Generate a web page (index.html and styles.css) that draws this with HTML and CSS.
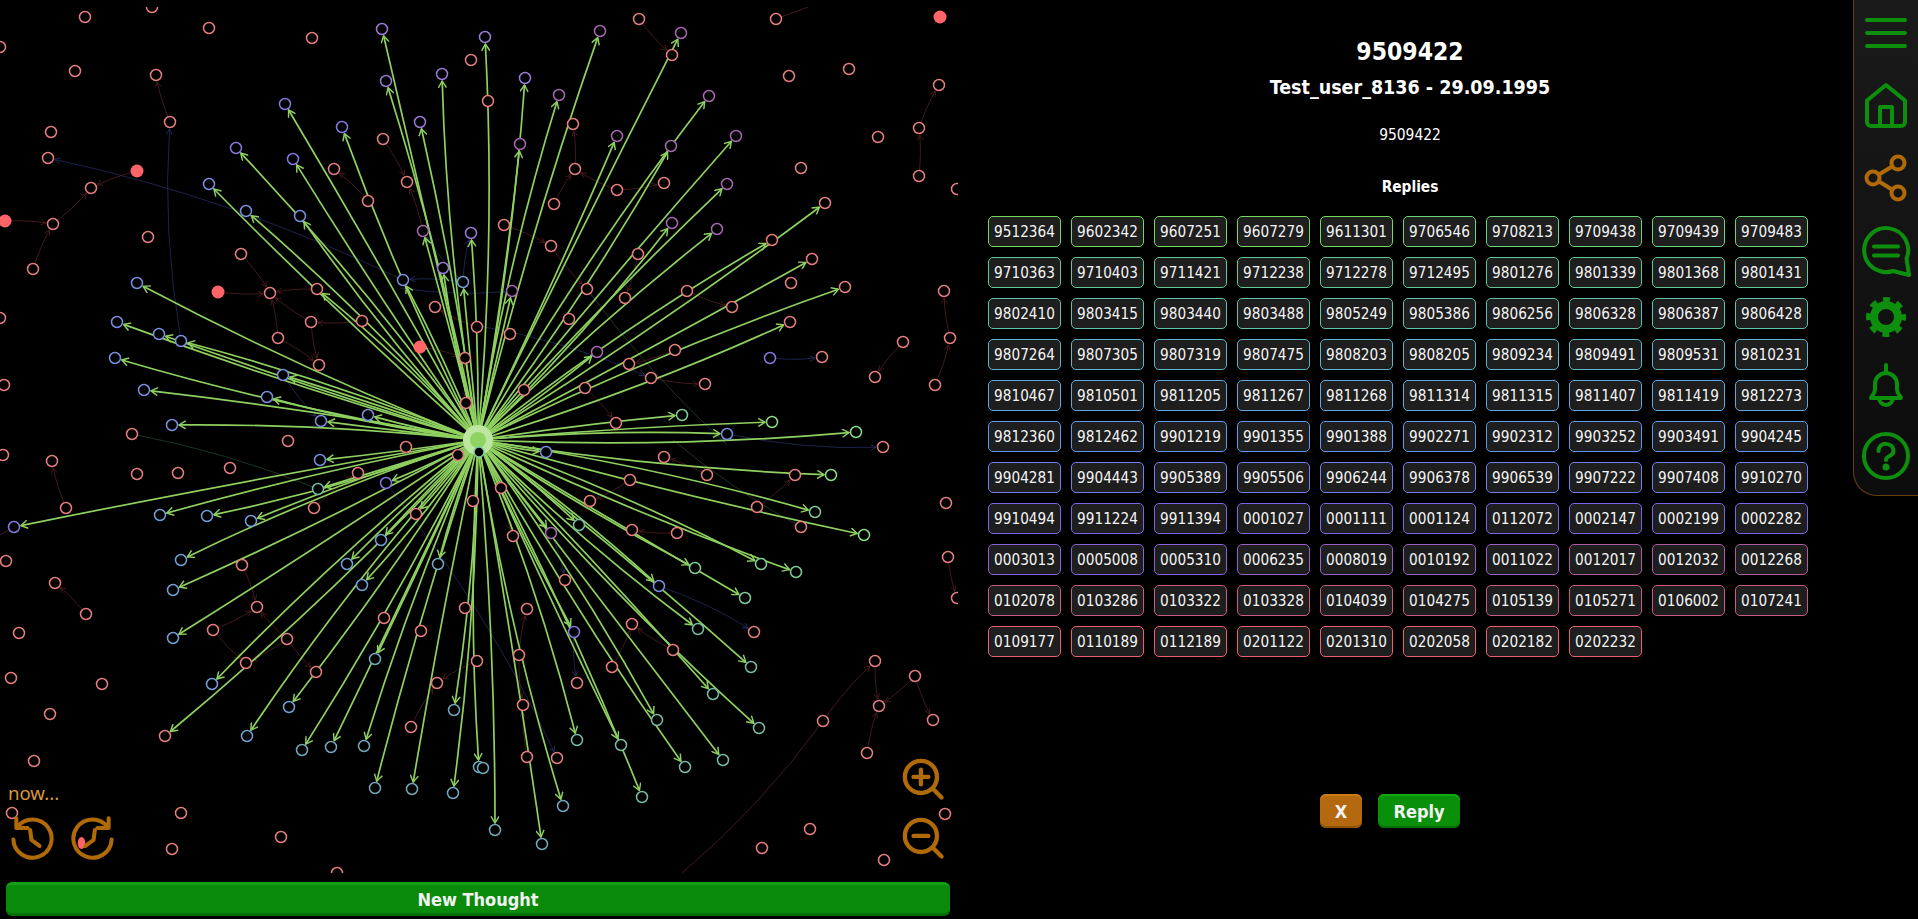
FILE: index.html
```html
<!DOCTYPE html>
<html lang="en">
<head>
  <meta charset="UTF-8">
  <title>Thought graph</title>
  <link rel="stylesheet" href="styles.css">
</head>
<body>
  <div class="app">
    <section class="graph-pane">
      <svg id="graph" class="graph" width="958" height="866" viewBox="0 7 958 866">
        <defs>
          <marker id="arrow-green" markerUnits="userSpaceOnUse" viewBox="0 0 10 10" refX="9" refY="5" markerWidth="9" markerHeight="9" orient="auto">
            <path d="M1.5 .5L9 5L1.5 9.5" fill="none" stroke="#8fd160" stroke-width="1.6"/>
          </marker>
          <marker id="arrow-pink" markerUnits="userSpaceOnUse" viewBox="0 0 10 10" refX="9" refY="5" markerWidth="7" markerHeight="7" orient="auto">
            <path d="M1.5 1L9 5L1.5 9" fill="none" stroke="#4a1d1f" stroke-width="1.2"/>
          </marker>
          <marker id="arrow-blue" markerUnits="userSpaceOnUse" viewBox="0 0 10 10" refX="9" refY="5" markerWidth="7" markerHeight="7" orient="auto">
            <path d="M1.5 1L9 5L1.5 9" fill="none" stroke="#2a3266" stroke-width="1.2"/>
          </marker>
        </defs>
      </svg>

      <div class="now-label">now...</div>
      <button class="tool tool-back" aria-label="Back in time">
        <svg viewBox="0 0 24 24"><path d="M3 12.500A9 9 0 1 0 4.900 6.500"/><path d="M4.400 2.500V7.100H9.700"/><path d="M10.900 8l.6 4.700l3.800 2.800"/></svg>
      </button>
      <button class="tool tool-forward" aria-label="Forward in time">
        <svg viewBox="0 0 24 24"><path d="M3 12.500A9 9 0 1 0 4.900 6.500"/><path d="M4.400 2.500V7.100H9.700"/><path d="M10.900 8l.6 4.700l3.800 2.800"/></svg>
      </button>
      <button class="tool tool-zoomin" aria-label="Zoom in">
        <svg viewBox="0 0 24 24"><circle cx="10" cy="10" r="7"/><path d="M15.200 15.200l3.800 3.800"/><path d="M6.800 10h6.400"/><path d="M10 6.800v6.400"/></svg>
      </button>
      <button class="tool tool-zoomout" aria-label="Zoom out">
        <svg viewBox="0 0 24 24"><circle cx="10" cy="10" r="7"/><path d="M15.200 15.200l3.800 3.800"/><path d="M6.800 10h6.400"/></svg>
      </button>

      <button class="new-thought">New Thought</button>
    </section>

    <section class="detail">
      <h1 class="detail-id">9509422</h1>
      <h2 class="detail-author">Test_user_8136 - 29.09.1995</h2>
      <p class="detail-body">9509422</p>
      <h3 class="detail-replies">Replies</h3>
      <div class="reply-grid">
        <a class="reply r1">9512364</a><a class="reply r1">9602342</a><a class="reply r1">9607251</a><a class="reply r1">9607279</a><a class="reply r1">9611301</a><a class="reply r1b">9706546</a><a class="reply r1b">9708213</a><a class="reply r1b">9709438</a><a class="reply r1b">9709439</a><a class="reply r1b">9709483</a>
        <a class="reply r2">9710363</a><a class="reply r2">9710403</a><a class="reply r2">9711421</a><a class="reply r2">9712238</a><a class="reply r2">9712278</a><a class="reply r2">9712495</a><a class="reply r2">9801276</a><a class="reply r2">9801339</a><a class="reply r2">9801368</a><a class="reply r2">9801431</a>
        <a class="reply r3">9802410</a><a class="reply r3">9803415</a><a class="reply r3">9803440</a><a class="reply r3">9803488</a><a class="reply r3">9805249</a><a class="reply r3">9805386</a><a class="reply r3">9806256</a><a class="reply r3">9806328</a><a class="reply r3">9806387</a><a class="reply r3">9806428</a>
        <a class="reply r4">9807264</a><a class="reply r4">9807305</a><a class="reply r4">9807319</a><a class="reply r4">9807475</a><a class="reply r4">9808203</a><a class="reply r4">9808205</a><a class="reply r4">9809234</a><a class="reply r4">9809491</a><a class="reply r4">9809531</a><a class="reply r4">9810231</a>
        <a class="reply r5">9810467</a><a class="reply r5">9810501</a><a class="reply r5">9811205</a><a class="reply r5">9811267</a><a class="reply r5">9811268</a><a class="reply r5">9811314</a><a class="reply r5">9811315</a><a class="reply r5">9811407</a><a class="reply r5">9811419</a><a class="reply r5">9812273</a>
        <a class="reply r6">9812360</a><a class="reply r6">9812462</a><a class="reply r6">9901219</a><a class="reply r6">9901355</a><a class="reply r6">9901388</a><a class="reply r6">9902271</a><a class="reply r6">9902312</a><a class="reply r6">9903252</a><a class="reply r6">9903491</a><a class="reply r6">9904245</a>
        <a class="reply r7">9904281</a><a class="reply r7">9904443</a><a class="reply r7">9905389</a><a class="reply r7">9905506</a><a class="reply r7">9906244</a><a class="reply r7">9906378</a><a class="reply r7">9906539</a><a class="reply r7">9907222</a><a class="reply r7">9907408</a><a class="reply r7">9910270</a>
        <a class="reply r8">9910494</a><a class="reply r8">9911224</a><a class="reply r8">9911394</a><a class="reply r8">0001027</a><a class="reply r8">0001111</a><a class="reply r8">0001124</a><a class="reply r8">0112072</a><a class="reply r8">0002147</a><a class="reply r8">0002199</a><a class="reply r8">0002282</a>
        <a class="reply r9">0003013</a><a class="reply r9">0005008</a><a class="reply r9">0005310</a><a class="reply r9b">0006235</a><a class="reply r9b">0008019</a><a class="reply r9b">0010192</a><a class="reply r9b">0011022</a><a class="reply r9c">0012017</a><a class="reply r9c">0012032</a><a class="reply r9c">0012268</a>
        <a class="reply r10">0102078</a><a class="reply r10">0103286</a><a class="reply r10">0103322</a><a class="reply r10">0103328</a><a class="reply r10">0104039</a><a class="reply r10">0104275</a><a class="reply r10">0105139</a><a class="reply r10">0105271</a><a class="reply r10">0106002</a><a class="reply r10">0107241</a>
        <a class="reply r11">0109177</a><a class="reply r11">0110189</a><a class="reply r11">0112189</a><a class="reply r11">0201122</a><a class="reply r11">0201310</a><a class="reply r11">0202058</a><a class="reply r11">0202182</a><a class="reply r11">0202232</a>
      </div>
      <div class="detail-actions">
        <button class="btn btn-close">X</button>
        <button class="btn btn-reply">Reply</button>
      </div>
    </section>

    <nav class="sidebar">
      <svg class="icon green" viewBox="0 0 48 48"><path d="M5 11h38M5 24h38M5 37h38"/></svg>
      <svg class="icon green" viewBox="0 0 48 48"><path d="M24 4L5 19.500V41a4 4 0 0 0 4 4H39a4 4 0 0 0 4-4V19.500Z"/><path d="M18 45V26H30V45"/></svg>
      <svg class="icon orange" viewBox="0 0 48 48"><circle cx="11" cy="24" r="6.500"/><circle cx="36" cy="9" r="6.500"/><circle cx="36" cy="39" r="6.500"/><path d="M17 20.500L30 12.500M17 27.500L30 35.500"/></svg>
      <svg class="icon green icon-tall" viewBox="0 0 50 52"><path d="M31 45A22 22 0 1 1 44.500 32.500L47 49Z"/><path d="M12 20.500H36M12 29.500H36"/></svg>
      <svg class="icon green" viewBox="0 0 48 48"><circle class="gear-body" cx="24" cy="24" r="12"/><circle class="gear-teeth" cx="24" cy="24" r="17"/></svg>
      <svg class="icon green" viewBox="0 0 48 48"><path d="M24 4v6"/><path d="M9 37c0-2 4-3 4-9v-5a11 11 0 0 1 22 0v5c0 6 4 7 4 9Z"/><path d="M17 37a7 7 0 0 0 14 0"/></svg>
      <svg class="icon green" viewBox="0 0 48 48"><circle cx="24" cy="24" r="22"/><path d="M16.500 19C16.500 9 31.500 10 31.500 19C31.500 25 24 23 24 28"/><circle class="dot" cx="24" cy="35" r="1.500"/></svg>
    </nav>
  </div>

  <script src="graph.js"></script>
</body>
</html>
```

FILE: styles.css
```css
* { box-sizing: border-box; }
html, body { height: 100%; }
body { margin: 0; background: #000; color: #f2f2f2; font-family: "DejaVu Sans", "Noto Sans", sans-serif; font-stretch: condensed; overflow: hidden; }
button { font-family: inherit; font-stretch: inherit; cursor: pointer; }

.app { display: flex; height: 919px; }

/* graph side */
.graph-pane { position: relative; flex: 0 0 958px; height: 919px; padding-top: 7px; }
.graph { display: block; }
.now-label { position: absolute; left: 8px; top: 780px; font-family: "Noto Sans", sans-serif; font-size: 18.600px; color: #d8983a; }
.tool { position: absolute; width: 51px; height: 51px; padding: 0; background: none; border: none; }
.tool svg { display: block; width: 100%; height: 100%; fill: none; stroke: #b06a08; stroke-width: 1.900; stroke-linecap: round; stroke-linejoin: round; }
.tool-back { left: 7px; top: 813px; }
.tool-forward { left: 67px; top: 813px; transform: scaleX(-1); }
.tool-zoomin { left: 898px; top: 754px; width: 55px; height: 55px; }
.tool-zoomout { left: 898px; top: 813px; width: 55px; height: 55px; }
.new-thought { position: absolute; left: 6px; right: 8px; top: 882px; height: 34px; background: #0a8a0a; color: #f2f2f2; border: none; border-top: 3px solid #12a012; border-bottom: 3px solid #066e06; border-radius: 6px; font-size: 18px; font-weight: 700; padding: 0; }

/* thought detail */
.detail { flex: 1; display: flex; flex-direction: column; padding: 0 21px 91px 30px; text-align: center; }
.detail-id { margin: 35px 0 0; font-size: 24.500px; line-height: 34px; font-weight: 700; color: #fff; }
.detail-author { margin: 7px 0 0; font-size: 19.500px; line-height: 24px; font-weight: 700; color: #fff; }
.detail-body { margin: 25px 0 0; font-size: 15.400px; line-height: 20px; color: #fff; }
.detail-replies { margin: 32px 0 0; font-size: 15.300px; line-height: 20px; font-weight: 700; color: #fff; }
.reply-grid { display: grid; grid-template-columns: repeat(10, 73px); grid-auto-rows: 31px; gap: 10px; margin-top: 19px; }
.reply { display: flex; align-items: center; justify-content: center; background: #1e1e1e; border: 1.500px solid; border-radius: 5px; font-size: 15.200px; color: #f4f4f4; }
.r1 { border-color: #74d85e; }
.r1b { border-color: #6cd478; }
.r2 { border-color: #62c896; }
.r3 { border-color: #5ec2ac; }
.r4 { border-color: #60b6c8; }
.r5 { border-color: #60a8dc; }
.r6 { border-color: #6098ee; }
.r7 { border-color: #7080f0; }
.r8 { border-color: #7c66e8; }
.r9 { border-color: #8862d8; }
.r9b { border-color: #9a5ec6; }
.r9c { border-color: #b05aa4; }
.r10 { border-color: #c85a86; }
.r11 { border-color: #ee5e6e; }

.detail-actions { margin-top: auto; padding-right: 40px; display: flex; justify-content: center; gap: 16px; }
.btn { height: 34px; padding: 0; color: #f2f2f2; border: none; border-radius: 6px; font-size: 18px; font-weight: 700; }
.btn-close { width: 42px; background: #b5690f; box-shadow: inset 0 2px 0 #cc7c16, inset 0 -2px 0 #8f5209; }
.btn-reply { width: 82px; background: #0a8f0a; box-shadow: inset 0 2px 0 #12a812, inset 0 -2px 0 #067006; }

/* right nav */
.sidebar { flex: 0 0 65px; height: 496px; display: grid; grid-template-rows: 66px 78px 68px 80px 50px 86px 56px; justify-items: start; align-items: center; padding-left: 8px; background: linear-gradient(180deg, #1a1a1a, #0c0c0c); border-left: 1.500px solid #6b3f08; border-bottom: 1.500px solid #6b3f08; border-bottom-left-radius: 24px; }
.icon { display: block; width: 48px; height: 48px; fill: none; stroke-width: 4; stroke-linecap: round; stroke-linejoin: round; }
.icon-tall { width: 50px; height: 52px; }
.icon.green { stroke: #0d8f0d; }
.icon.orange { stroke: #b06a08; }
.gear-body { stroke-width: 8; }
.gear-teeth { stroke-width: 6; stroke-dasharray: 6.700 6.650; stroke-dashoffset: 3.350; stroke-linecap: butt; }
.dot { fill: #0d8f0d; }

/* graph marks */
.spoke { fill: none; stroke: #8fd160; stroke-width: 1.700; marker-end: url(#arrow-green); }
.link { fill: none; stroke-width: .9; }
.link-pink { stroke: #4a1d1f; marker-end: url(#arrow-pink); }
.link-blue { stroke: #1f2752; marker-end: url(#arrow-blue); }
.link-green { stroke: #1f3a24; }
.link-fade { stroke: #4a1d1f; }
.node { fill: #000; stroke-width: 1.500; }
.node-fill { stroke: none; fill: #ff6468; }
.hub-outer { fill: #bde6a0; }
.hub-inner { fill: #8fd462; }
```

FILE: graph.js
```js
const HUB = [478, 440];

// node positions grouped by colour
const nodes = {
  "#e77f80": [[85,17],[152,7],[209,28],[312,38],[0,47],[75,71],[156,75],[170,122],[51,132],[48,158],[91,188],[53,224],[33,269],[148,237],[241,254],[270,293],[317,289],[311,322],[362,321],[278,338],[319,365],[334,169],[368,201],[383,139],[407,182],[471,60],[435,307],[477,327],[465,358],[466,403],[132,434],[288,441],[4,385],[0,318],
    [639,19],[776,19],[672,55],[789,76],[849,69],[939,85],[919,128],[878,137],[919,176],[801,168],[957,189],[488,101],[573,124],[575,169],[617,190],[664,183],[554,204],[504,225],[551,246],[587,289],[638,254],[625,298],[569,319],[687,291],[732,307],[772,240],[825,203],[812,259],[791,283],[845,287],[790,322],[675,350],[629,364],[651,378],[585,388],[524,390],[705,384],[616,423],[510,334],[944,291],[950,338],[903,342],[875,377],[935,385],[822,357],
    [3,455],[52,461],[137,474],[178,473],[230,468],[406,447],[458,455],[358,473],[314,508],[66,508],[6,561],[55,583],[86,614],[19,633],[11,678],[102,684],[50,714],[34,761],[12,813],[181,813],[172,849],[281,837],[337,873],[242,565],[257,607],[213,630],[287,639],[246,663],[316,672],[165,736],[416,514],[473,501],[384,618],[421,631],[465,608],[477,661],[437,683],[411,727],
    [664,457],[707,475],[795,475],[630,480],[590,501],[501,488],[513,536],[757,507],[801,527],[632,530],[677,533],[565,580],[527,609],[519,655],[632,624],[673,650],[612,667],[577,683],[523,705],[754,632],[527,757],[557,758],[883,447],[946,503],[948,557],[957,598],[875,661],[915,676],[879,706],[933,720],[823,721],[867,753],[945,814],[810,829],[762,848],[884,860]],
  "#9c7ad8": [[382,29],[386,81],[442,74],[420,122],[485,37],[525,78],[443,268],[471,233]],
  "#a668b0": [[600,31],[681,33],[559,95],[520,144],[617,136],[709,96],[671,146],[736,136],[727,184],[672,223],[717,229],[597,352],[551,533],[423,231],[512,291]],
  "#8279e0": [[285,104],[342,127],[236,148],[293,159],[14,527],[386,483],[770,358],[574,632]],
  "#7b8fe0": [[209,184],[246,211],[300,216],[403,280],[137,283],[117,322],[159,334],[181,341],[115,358],[283,375],[144,390],[267,397],[172,425],[321,421],[368,415],[320,460],[546,452],[727,434],[659,586]],
  "#74a0d8": [[463,282],[160,515],[207,516],[251,521],[181,560],[173,590],[173,638],[212,684],[381,540],[347,564],[362,585],[247,736],[289,707]],
  "#74a8bc": [[438,564],[375,659],[302,750],[331,747],[364,746],[454,710],[375,788],[412,789],[453,793],[479,767],[483,768],[495,830],[542,844],[563,806]],
  "#78bca8": [[318,489],[579,525],[577,740],[621,745],[642,797],[657,720],[685,767],[723,760],[713,694],[759,728],[751,667],[698,629]],
  "#80cc98": [[695,568],[761,564],[796,572],[745,598],[815,512],[682,415]],
  "#88dd88": [[772,422],[856,432],[831,475],[864,535]]
};

const filled = [[137,171],[5,221],[218,292],[420,347],[940,17]];

// nodes with a green edge from the hub
const spokes = [[382,29],[386,81],[442,74],[420,122],[285,104],[342,127],[236,148],[293,159],[209,184],[246,211],[300,216],[423,231],[471,233],[443,268],[403,280],[463,282],[137,283],[317,289],[117,322],[159,334],[181,341],[115,358],[283,375],[144,390],[267,397],[172,425],[321,421],[368,415],
  [485,37],[600,31],[681,33],[525,78],[559,95],[520,144],[617,136],[709,96],[671,146],[736,136],[727,184],[672,223],[717,229],[512,291],[597,352],[772,240],[825,203],[812,259],[845,287],[790,322],[682,415],[772,422],[856,432],[727,434],
  [14,527],[160,515],[207,516],[251,521],[318,489],[386,483],[181,560],[173,590],[173,638],[212,684],[165,736],[381,540],[347,564],[362,585],[438,564],[375,659],[289,707],[247,736],[302,750],[331,747],[364,746],[454,710],[375,788],[412,789],[453,793],[479,767],[320,460],[416,514],
  [546,452],[579,525],[551,533],[695,568],[761,564],[796,572],[745,598],[659,586],[698,629],[751,667],[713,694],[759,728],[657,720],[621,745],[574,632],[577,740],[685,767],[723,760],[642,797],[563,806],[495,830],[542,844],[831,475],[815,512],[864,535]];

const pinkLinks = [[170,122,156,75],[137,171,91,188],[5,221,53,224],[53,224,91,188],[33,269,53,224],[218,292,270,293],[241,254,270,293],[317,289,270,293],[311,322,270,293],[278,338,270,293],[362,321,311,322],[311,322,319,365],[278,338,319,365],[368,201,334,169],[383,139,407,182],[423,231,407,182],[420,347,465,358],[465,358,466,403],[477,327,435,307],
  [639,19,672,55],[919,128,939,85],[919,176,919,128],[617,190,575,169],[617,190,664,183],[554,204,575,169],[575,169,573,124],[504,225,551,246],[551,246,587,289],[638,254,625,298],[687,291,732,307],[675,350,629,364],[651,378,705,384],[585,388,616,423],[903,342,875,377],[950,338,944,291],[935,385,950,338],
  [66,508,52,461],[86,614,55,583],[242,565,257,607],[213,630,257,607],[287,639,257,607],[213,630,246,663],[287,639,246,663],[287,639,316,672],[411,727,437,683],[477,661,437,683],[314,508,358,473],
  [707,475,664,457],[630,480,590,501],[757,507,795,475],[677,533,632,530],[501,488,513,536],[519,655,527,609],[519,655,523,705],[527,757,523,705],[612,667,632,624],[673,650,632,624],[948,557,957,598],[823,721,875,661],[875,661,879,706],[915,676,879,706],[915,676,933,720],[867,753,879,706]];

const blueLinks = [[181,341,170,122],[403,280,48,158],[463,282,423,231],[463,282,403,280],[463,282,471,233],[770,358,822,357],[480,326,651,378],[400,288,512,291],[386,483,557,758],[727,434,883,447],[551,533,565,580],[574,632,577,683],[659,586,754,632],[283,375,321,421]];

const greenLinks = [[587,289,727,445],[673,440,801,527],[318,489,132,434]];

// edges that run off the canvas, no arrow head in view
const fadeLinks = [[776,19,808,7,0],[823,721,682,873,-0.06],[14,527,0,535,0]];

const svgNs = "http://www.w3.org/2000/svg";
const graph = document.getElementById("graph");

function add(tag, attrs) {
  const el = document.createElementNS(svgNs, tag);
  for (const key in attrs) el.setAttribute(key, attrs[key]);
  graph.appendChild(el);
  return el;
}

// quadratic edge from a to b, stopped at the edge of the target node
function edge(x1, y1, x2, y2, bend, stop) {
  const dx = x2 - x1, dy = y2 - y1;
  const len = Math.hypot(dx, dy) || 1;
  const cx = (x1 + x2) / 2 - dy * bend;
  const cy = (y1 + y2) / 2 + dx * bend;
  const tl = Math.hypot(x2 - cx, y2 - cy) || len;
  const ex = x2 - (x2 - cx) / tl * stop;
  const ey = y2 - (y2 - cy) / tl * stop;
  return `M${x1} ${y1}Q${cx.toFixed(1)} ${cy.toFixed(1)} ${ex.toFixed(1)} ${ey.toFixed(1)}`;
}

greenLinks.forEach(l => add("path", { class: "link link-green", d: edge(l[0], l[1], l[2], l[3], 0.05, 0) }));
fadeLinks.forEach(l => add("path", { class: "link link-fade", d: edge(l[0], l[1], l[2], l[3], l[4], 0) }));
blueLinks.forEach((l, i) => add("path", { class: "link link-blue", d: edge(l[0], l[1], l[2], l[3], i % 2 ? 0.06 : -0.06, 7) }));
pinkLinks.forEach((l, i) => add("path", { class: "link link-pink", d: edge(l[0], l[1], l[2], l[3], i % 2 ? 0.05 : -0.05, 7) }));

spokes.forEach((s, i) => {
  const bend = 0.035 * Math.sin(i * 2.3);
  add("path", { class: "spoke", d: edge(HUB[0], HUB[1], s[0], s[1], bend, 7) });
});

for (const color in nodes) {
  nodes[color].forEach(n => add("circle", { class: "node", cx: n[0], cy: n[1], r: 5.5, stroke: color }));
}
filled.forEach(n => add("circle", { class: "node-fill", cx: n[0], cy: n[1], r: 6.5 }));
// the one red node mostly hidden behind the forward button
add("ellipse", { class: "node-fill", cx: 81.5, cy: 843, rx: 3.8, ry: 6 });

add("circle", { class: "hub-outer", cx: HUB[0], cy: HUB[1], r: 15 });
add("circle", { class: "hub-inner", cx: HUB[0], cy: HUB[1], r: 8 });
add("circle", { class: "node", cx: 479, cy: 452, r: 5, stroke: "#78c8b0" });
```
